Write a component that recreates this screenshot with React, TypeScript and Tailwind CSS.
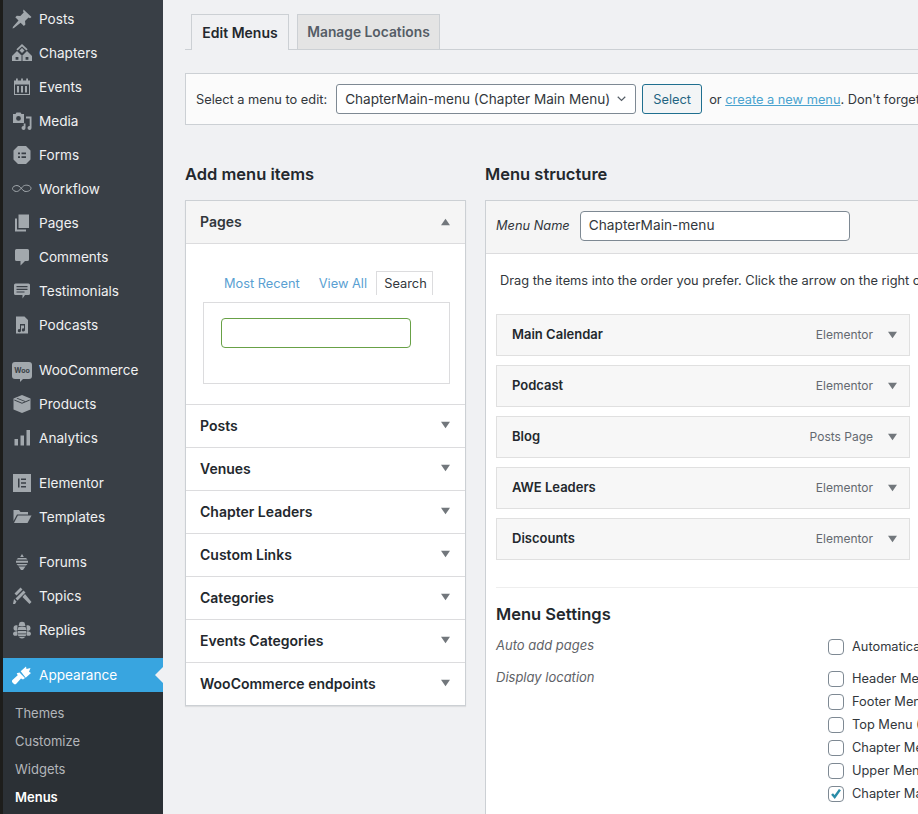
import type { ReactNode } from 'react';

const I = ({ children }: { children: ReactNode }) => (
  <svg viewBox="0 0 20 20" className="h-[20px] w-[20px]" fill="#a2a8ad">
    {children}
  </svg>
);

const icons: Record<string, ReactNode> = {
  pin: <path d="M11.500 0.500l8 7.500-1.500 1.300-1.400-.7-3.600 3.400.4 3.600-1.500 1.400-3.300-3.300L2 19l-1.500.5.500-1.700 5.500-6.300-3.200-3.300 1.500-1.500 3.500.4 3.400-3.600-.6-1.300z" />,
  chapters: (
    <>
      <path d="M10 1l5.600 5.300-1.200 1.300L10 3.500 5.600 7.600 4.400 6.300z" />
      <path d="M10 5l2.500 2.400L10 10 7.500 7.400z" />
      <path d="M5 8l4.500 4.500V18H0v-5z" />
      <path d="M15 8l5 5v5h-9.500v-5.500z" />
      <path d="M3.600 14h2.800v2.800H3.600zM13.600 14h2.800v2.800h-2.800z" fill="#393f46" />
    </>
  ),
  calendar: (
    <path
      fillRule="evenodd"
      d="M2 3.500h2V1.500h1.800v2h3.300V1.500h1.800v2h3.300V1.500H16v2h2V18H2zm1 4V17h14V7.500zM5 9h2v6.500H5zm4 0h2v6.500H9zm4 0h2v6.500h-2z"
    />
  ),
  media: (
    <>
      <path
        fillRule="evenodd"
        d="M1 3h2.500l1-1.500h4L9.500 3H12v9H1zm5.500 2a2.400 2.400 0 1 0 0 4.800 2.400 2.400 0 0 0 0-4.800z"
      />
      <path d="M14 5.500h5.500V17a2 2 0 1 1-1.800-2V7.500H14z" />
      <path d="M13.500 12.500V17a2 2 0 1 1-1.800-2v-2.500z" />
    </>
  ),
  forms: (
    <path
      fillRule="evenodd"
      d="M6 1h8l4.500 4.500v9L14 19H6l-4.500-4.500v-9zM6 7.500v1.800h2V7.500zm3.500 0v1.800H14V7.500zm-3.500 3.700V13h2v-1.800zm3.500 0V13H14v-1.800z"
    />
  ),
  workflow: (
    <path
      d="M5 6.500c3 0 4.500 4 7 5.500 2.500 1.300 7-.2 7-2.700 0-2.300-3.500-3.800-6.500-2.800-3 1-4.500 6-8 6-2 0-4-1.500-4-3s2-3 4.500-3z"
      fill="none"
      stroke="#a2a8ad"
      strokeWidth="1"
    />
  ),
  pages: (
    <>
      <path d="M6.500 1.500H17V15H6.500z" />
      <path d="M3 5.500v13h11V16.500H5V5.500z" />
    </>
  ),
  comments: <path d="M4.500 2h11A1.500 1.500 0 0 1 17 3.500v9a1.500 1.500 0 0 1-1.500 1.500H13l-4.500 4.500V14h-4A1.500 1.500 0 0 1 3 12.500v-9A1.500 1.500 0 0 1 4.500 2z" />,
  testimonials: (
    <path
      fillRule="evenodd"
      d="M3.500 2.500h13A1.500 1.500 0 0 1 18 4v8.500a1.500 1.500 0 0 1-1.500 1.500H13l-2.500 3.500V14h-7A1.500 1.500 0 0 1 2 12.500V4a1.500 1.500 0 0 1 1.500-1.500zM4.500 5v1.200h11V5zm0 2.700v1.200h11V7.700zm0 2.700v1.200h8v-1.200z"
    />
  ),
  podcast: (
    <path
      fillRule="evenodd"
      d="M4 1.500h8.500L16 5v13.500H4zm4 7.500v5.200a1.600 1.600 0 1 0 1 1.400V10.500h3v3a1.600 1.600 0 1 0 1 1.300V9z"
    />
  ),
  box: (
    <path
      fillRule="evenodd"
      d="M10 1l8.500 3.500v11L10 19l-8.500-3.500v-11zM4.500 4.500l8.300 3.200.9-.4-8.200-3.300zM2.300 5.600v.9l7.700 3.200 7.700-3.200v-.9L10 8.800z"
    />
  ),
  bars: (
    <>
      <rect x="2.500" y="11" width="3.500" height="6.500" />
      <rect x="8.500" y="7.500" width="3.500" height="10" />
      <rect x="14.500" y="2" width="3.500" height="15.500" />
    </>
  ),
  elementor: (
    <path
      fillRule="evenodd"
      d="M1 1h18v18H1zM6 5.500v9h1.500v-9zm3 0V7h5V5.500zm0 3.750v1.500h5v-1.500zM9 13v1.500h5V13z"
    />
  ),
  folder: (
    <>
      <path d="M1.500 3h5.500l1.500 2h7.500v2.500H5L1.500 14z" />
      <path d="M5.800 8.500H19.500L15.500 16H2z" />
    </>
  ),
  forums: (
    <>
      <path d="M10 2l1.800 3H8.200z" />
      <path d="M6 6h8l1.500 1.500h-11zM4 8.800h12v2H4zM4.500 12h11L14 13.500H6zM6.500 14.500h7L11 18H9z" />
    </>
  ),
  topics: (
    <>
      <path d="M8.500 1.500l2 2-6 6-2-2zM11.500 4.500l2 2-8 8-2-2z" />
      <path d="M13 8l6.500 8-2 2L10.500 11z" />
      <path d="M2 13l2.500 2.500L3 18H1z" />
    </>
  ),
  replies: (
    <>
      <path d="M7.500 2.500c1.500-1 3.500-1 5 0L13.500 6h-7z" />
      <path d="M6 11h8c.7 2.800.3 7-4 7.500-4.300-.5-4.700-4.700-4-7.500z" />
      <path d="M10 6.500l3.500.5 1 3h-9l1-3z" />
      <path d="M5.500 5.500C3 4.800 1.500 6 1.500 8.300s1.500 2.700 3.700 2.200zM14.500 5.500c2.500-.7 4 .5 4 2.800s-1.500 2.700-3.700 2.200zM5.300 11.300c-2.500-.2-4.300.7-4.300 2.500s2 2.700 4.500 1.500zM14.700 11.300c2.500-.2 4.300.7 4.300 2.500s-2 2.700-4.500 1.500z" />
      <path d="M5.500 13.500h9v.8h-9zM6 16h8v.8H6z" fill="#393f46" />
    </>
  ),
  brush: (
    <g fill="#fff">
      <path d="M8.700 6.300L14 1.500l.5 2.500 4-1-1.500 3.700 2 1.300-5.300 4.700z" />
      <path d="M7.500 7.500l5.500 5.500-2 1.500-2-1-4.500 5a2 2 0 0 1-3 0l-.8-.8a2 2 0 0 1 0-3l5-4.500-1-2z" />
    </g>
  ),
};

const WooIcon = () => (
  <div className="relative flex h-[17px] w-[20px] items-center justify-center rounded-[3px] bg-[#a2a8ad]">
    <span className="text-[7px] leading-none font-bold text-[#393f46]">Woo</span>
    <div className="absolute -bottom-[3px] left-[8px] h-0 w-0 border-t-[3px] border-r-[3px] border-t-[#a2a8ad] border-r-transparent" />
  </div>
);

const menuGroups: { icon: string; label: string }[][] = [
  [
    { icon: 'pin', label: 'Posts' },
    { icon: 'chapters', label: 'Chapters' },
    { icon: 'calendar', label: 'Events' },
    { icon: 'media', label: 'Media' },
    { icon: 'forms', label: 'Forms' },
    { icon: 'workflow', label: 'Workflow' },
    { icon: 'pages', label: 'Pages' },
    { icon: 'comments', label: 'Comments' },
    { icon: 'testimonials', label: 'Testimonials' },
    { icon: 'podcast', label: 'Podcasts' },
  ],
  [
    { icon: 'woo', label: 'WooCommerce' },
    { icon: 'box', label: 'Products' },
    { icon: 'bars', label: 'Analytics' },
  ],
  [
    { icon: 'elementor', label: 'Elementor' },
    { icon: 'folder', label: 'Templates' },
  ],
  [
    { icon: 'forums', label: 'Forums' },
    { icon: 'topics', label: 'Topics' },
    { icon: 'replies', label: 'Replies' },
  ],
];

const Sidebar = () => (
  <aside className="flex w-[163px] shrink-0 flex-col border-l-[3px] border-[#1d1d1b] bg-[#393f46] pt-[2px]">
    <div className="flex flex-col gap-[11px]">
      {menuGroups.map((group, i) => (
        <div key={i}>
          {group.map((item) => (
            <div key={item.label} className="flex h-[34px] items-center gap-[7px] pl-[9px] text-[13.6px] text-[#f0f1f2]">
              {item.icon === 'woo' ? <WooIcon /> : <I>{icons[item.icon]}</I>}
              <span>{item.label}</span>
            </div>
          ))}
        </div>
      ))}
    </div>
    <div className="relative mt-[11px] flex h-[34px] items-center gap-[7px] bg-[#38a5e0] pl-[9px] text-[13.6px] text-white">
      <I>{icons.brush}</I>
      <span>Appearance</span>
      <div className="absolute top-[9px] right-0 h-0 w-0 border-y-[8px] border-r-[8px] border-y-transparent border-r-[#f0f1f3]" />
    </div>
    <div className="flex flex-1 flex-col bg-[#2b3035] pt-[8px] pl-[12px] text-[13px]">
      {['Themes', 'Customize', 'Widgets'].map((s) => (
        <div key={s} className="flex h-[28px] items-center text-[#b3b6ba]">
          {s}
        </div>
      ))}
      <div className="flex h-[28px] items-center font-semibold text-white">Menus</div>
    </div>
  </aside>
);

const Caret = ({ up }: { up?: boolean }) => (
  <svg viewBox="0 0 10 8" className="h-[8px] w-[9px]" fill="#72777c">
    <path d={up ? 'M5 0.500L10 7.500H0z' : 'M0 0.500h10L5 7.500z'} />
  </svg>
);

const accordionRows = ['Posts', 'Venues', 'Chapter Leaders', 'Custom Links', 'Categories', 'Events Categories', 'WooCommerce endpoints'];

const AddItems = () => (
  <div className="w-[281px] shrink-0">
    <h2 className="mb-[15px] h-[22px] text-[16.5px] leading-[22px] font-semibold text-[#23282d]">Add menu items</h2>
    <div className="border border-[#ccd0d4] bg-white shadow-[0_1px_1px_rgba(0,0,0,0.08)]">
      <div className="flex h-[43px] items-center justify-between border-b border-[#dcdcde] bg-[#f5f5f5] pr-[15px] pb-[1px] pl-[14px] text-[14px] font-semibold text-[#32373c]">
        <span>Pages</span>
        <Caret up />
      </div>
      <div className="h-[160px] pt-[27px] pl-[17px]">
        <div className="mb-[7px] flex h-[24px] w-[247px] items-center justify-end pr-[17px] text-[12.8px]">
          <span className="mr-[19px] pt-[1px] text-[#5a9fd2]">Most Recent</span>
          <span className="mr-[9px] pt-[1px] text-[#5a9fd2]">View All</span>
          <span className="flex h-[24px] w-[57px] items-center justify-center border border-b-0 border-[#dcdcde] pt-[1px] pl-[2px] text-[#32373c]">Search</span>
        </div>
        <div className="h-[82px] w-[247px] border border-[#dcdcde] pt-[15px] pl-[17px]">
          <div className="h-[30px] w-[190px] rounded-[4px] border border-[#68a146] bg-white" />
        </div>
      </div>
      {accordionRows.map((r) => (
        <div key={r} className="flex h-[43px] items-center justify-between border-t border-[#dcdcde] pr-[15px] pb-[2px] pl-[14px] text-[14px] font-semibold text-[#23282d]">
          <span>{r}</span>
          <Caret />
        </div>
      ))}
    </div>
  </div>
);

const menuItems = [
  { name: 'Main Calendar', type: 'Elementor' },
  { name: 'Podcast', type: 'Elementor' },
  { name: 'Blog', type: 'Posts Page' },
  { name: 'AWE Leaders', type: 'Elementor' },
  { name: 'Discounts', type: 'Elementor' },
];

const Check = ({ checked, label, className }: { checked?: boolean; label: string; className: string }) => (
  <div className={`flex items-center gap-[8px] text-[12.8px] text-[#32373c] ${className}`}>
    <div className="flex h-[16px] w-[16px] items-center justify-center rounded-[4px] border border-[#7e8993] bg-white">
      {checked && (
        <svg viewBox="0 0 16 16" className="h-[16px] w-[16px]" fill="none" stroke="#2a8ca8" strokeWidth="2.800">
          <path d="M3.500 8l3 3.500L12.500 3" />
        </svg>
      )}
    </div>
    <span>{label}</span>
  </div>
);

const MenuStructure = () => (
  <div className="w-[560px] shrink-0">
    <h2 className="mb-[15px] h-[22px] text-[16.5px] leading-[22px] font-semibold text-[#23282d]">Menu structure</h2>
    <div className="h-[640px] border border-[#ccd0d4] bg-white">
      <div className="flex h-[53px] items-center gap-[10px] border-b border-[#dcdcde] bg-[#f5f5f5] pb-[3px] pl-[10px]">
        <span className="pt-[1px] text-[12.8px] text-[#32373c] italic">Menu Name</span>
        <div className="flex h-[30px] w-[270px] items-center rounded-[4px] border border-[#7e8993] bg-white pl-[8px] text-[13.7px] text-[#32373c]">
          ChapterMain-menu
        </div>
      </div>
      <div className="px-[10px]">
        <p className="pt-[18px] pl-[4px] text-[12.8px] leading-[18px] whitespace-nowrap text-[#32373c]">
          Drag the items into the order you prefer. Click the arrow on the right of the item to reveal additional options.
        </p>
        <div className="mt-[24px] flex w-[414px] flex-col gap-[9px]">
          {menuItems.map((m) => (
            <div key={m.name} className="flex h-[42px] items-center justify-between border border-[#e0e0e0] bg-[#f7f7f7] pr-[12px] pl-[15px]">
              <span className="text-[13px] font-semibold text-[#23282d]">{m.name}</span>
              <span className="flex items-center gap-[15px] text-[12px] text-[#646970]">
                {m.type}
                <Caret />
              </span>
            </div>
          ))}
        </div>
        <div className="mt-[27px] border-t border-[#eeeeee] pt-[15px]">
          <h3 className="h-[22px] text-[16.5px] leading-[22px] font-semibold text-[#23282d]">Menu Settings</h3>
          <div className="mt-[11px] flex">
            <div className="w-[332px] shrink-0 text-[13px] text-[#5f6368] italic">
              <div className="h-[32px] leading-[18px]">Auto add pages</div>
              <div className="leading-[18px]">Display location</div>
            </div>
            <div className="mt-[1px] flex flex-col whitespace-nowrap">
              <Check className="h-[20px]" label="Automatically add new top-level pages" />
              <Check className="mt-[12px] h-[20px]" label="Header Menu" />
              <Check className="mt-[3px] h-[20px]" label="Footer Menu" />
              <Check className="mt-[3px] h-[20px]" label="Top Menu (Currently" />
              <Check className="mt-[3px] h-[20px]" label="Chapter Menu" />
              <Check className="mt-[3px] h-[20px]" label="Upper Menu" />
              <Check className="mt-[3px] h-[20px]" checked label="Chapter Main Menu" />
            </div>
          </div>
        </div>
      </div>
    </div>
  </div>
);

export default function App() {
  return (
    <div className="flex h-[814px] w-[918px] overflow-hidden bg-[#f0f1f3] font-['Inter',sans-serif]">
      <Sidebar />
      <main className="min-w-0 flex-1 pt-[14px] pl-[22px]">
        <div className="flex h-[36px] items-end gap-[8px] border-b border-[#ccd0d4] pl-[6px]">
          <div className="-mb-px flex h-[36px] w-[98px] items-center justify-center border border-b-0 border-[#ccd0d4] bg-[#f0f1f3] pb-[1px] text-[14px] font-semibold text-[#23282d]">
            Edit Menus
          </div>
          <div className="flex h-[35px] w-[143px] items-center justify-center border border-b-0 border-[#ccd0d4] bg-[#e4e4e4] text-[13.8px] font-semibold text-[#555d66]">
            Manage Locations
          </div>
        </div>
        <div className="mt-[23px] flex h-[52px] items-center border border-r-0 border-[#ccd0d4] bg-[#fbfbfb] pl-[10px] text-[12.8px] whitespace-nowrap text-[#32373c]">
          <span className="pt-[1px]">Select a menu to edit:</span>
          <div className="ml-[9px] flex h-[30px] w-[300px] shrink-0 items-center justify-between rounded-[3px] border border-[#7e8993] bg-white pr-[9px] pl-[8px] text-[13.6px]">
            <span className="pt-[1px]">ChapterMain-menu (Chapter Main Menu)</span>
            <svg viewBox="0 0 12 8" className="h-[6px] w-[9px]" fill="none" stroke="#555d66" strokeWidth="1.600">
              <path d="M1 1l5 5 5-5" />
            </svg>
          </div>
          <div className="ml-[6px] flex h-[30px] w-[60px] shrink-0 items-center justify-center rounded-[3px] border border-[#1f6f8f] bg-[#f3f5f6] pt-[1px] text-[#1f6482]">
            Select
          </div>
          <span className="ml-[7px] pt-[1px]">
            or <span className="text-[#4aa3cf] underline">create a new menu</span>. Don't forget to save your changes!
          </span>
        </div>
        <div className="mt-[38px] flex gap-[19px]">
          <AddItems />
          <MenuStructure />
        </div>
      </main>
    </div>
  );
}
